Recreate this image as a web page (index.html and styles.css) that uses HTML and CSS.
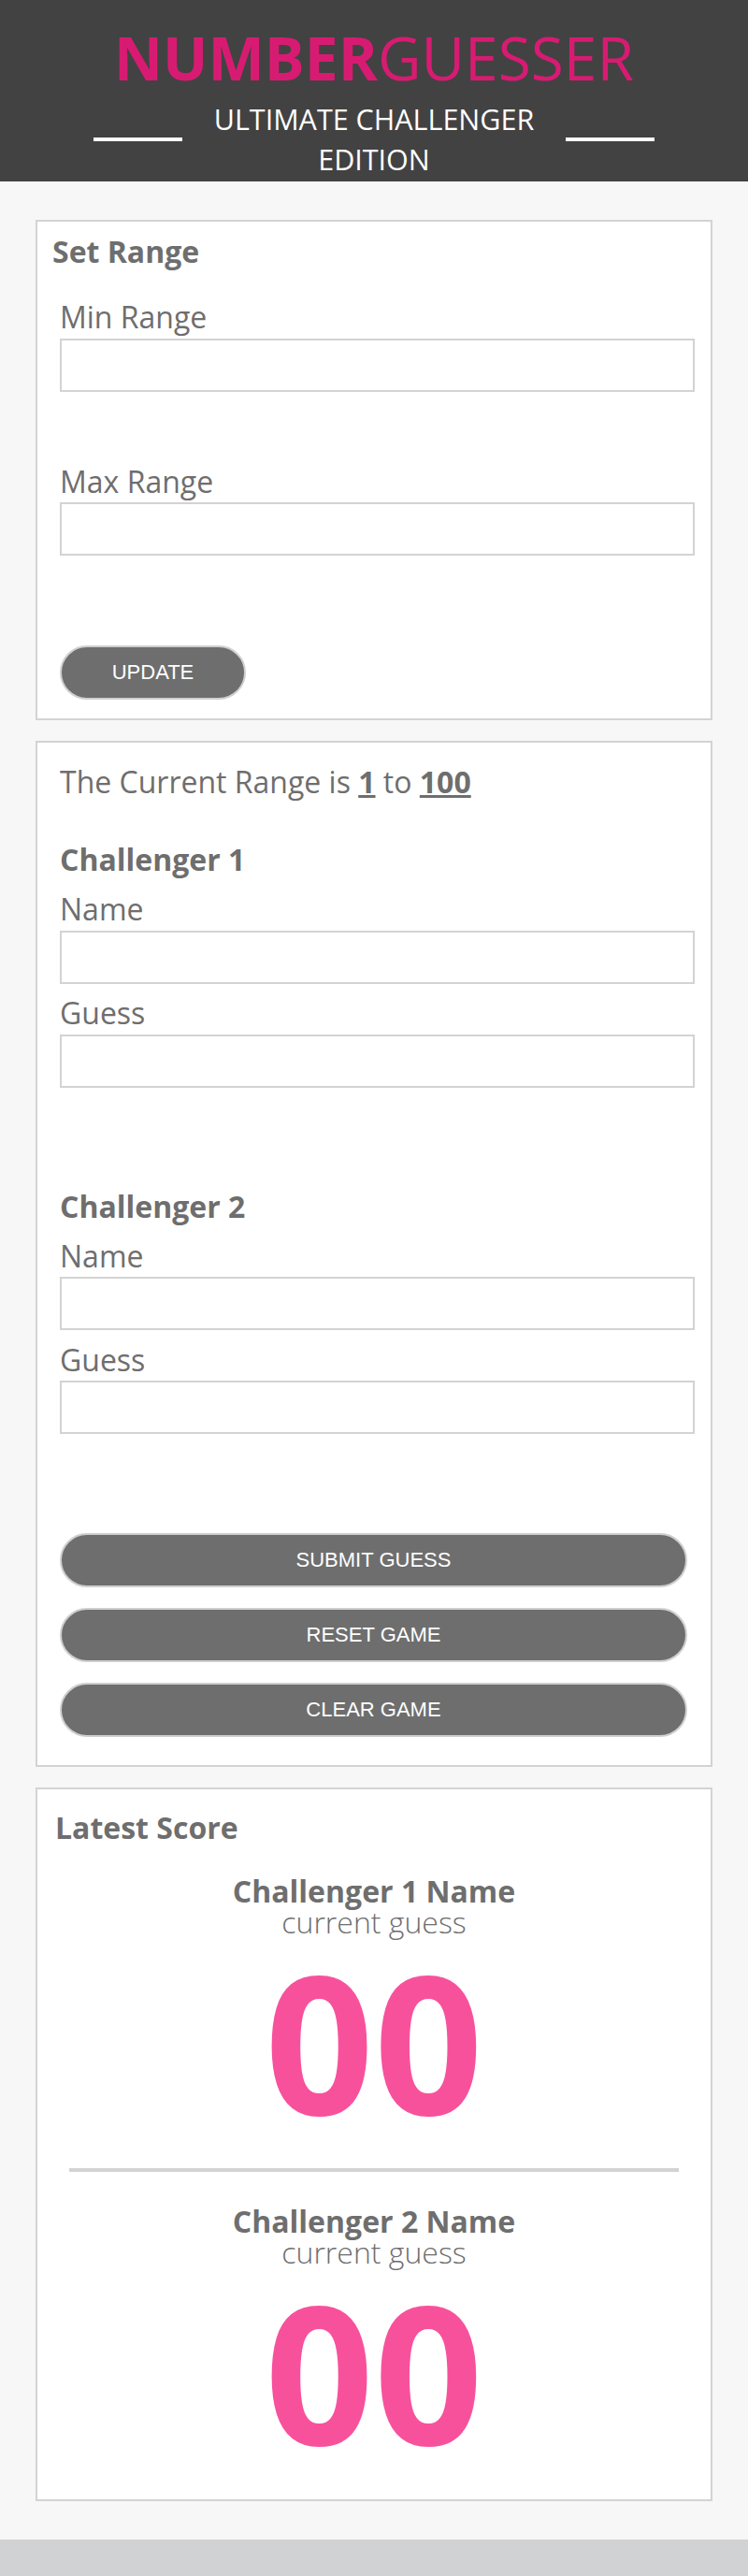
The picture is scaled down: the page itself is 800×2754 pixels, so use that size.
FILE: index.html
```html
<!DOCTYPE html>
<html lang="en">
<head>
<meta charset="utf-8">
<title>Number Guesser</title>
<link rel="stylesheet" href="styles.css">
</head>
<body>
<header class="site-header">
  <h1 class="title"><span class="title-bold">NUMBER</span><span class="title-light">GUESSER</span></h1>
  <div class="subtitle-row">
    <span class="rule"></span>
    <h2 class="subtitle">ULTIMATE CHALLENGER EDITION</h2>
    <span class="rule"></span>
  </div>
</header>
<main class="main">
  <section class="card range-card">
    <h3 class="card-title range-title">Set Range</h3>
    <label class="field-label first-label">Min Range</label>
    <input class="field-input" type="text">
    <label class="field-label spaced-label">Max Range</label>
    <input class="field-input" type="text">
    <button class="pill-btn update-btn">UPDATE</button>
  </section>

  <section class="card game-card">
    <p class="current-range">The Current Range is <strong class="range-num">1</strong> to <strong class="range-num">100</strong></p>
    <h3 class="card-title challenger-title first-challenger">Challenger 1</h3>
    <label class="field-label tight-label">Name</label>
    <input class="field-input" type="text">
    <label class="field-label tight-label">Guess</label>
    <input class="field-input" type="text">
    <h3 class="card-title challenger-title second-challenger">Challenger 2</h3>
    <label class="field-label tight-label">Name</label>
    <input class="field-input" type="text">
    <label class="field-label tight-label">Guess</label>
    <input class="field-input" type="text">
    <div class="btn-stack">
      <button class="pill-btn wide-btn">SUBMIT GUESS</button>
      <button class="pill-btn wide-btn">RESET GAME</button>
      <button class="pill-btn wide-btn">CLEAR GAME</button>
    </div>
  </section>

  <section class="card score-card">
    <h3 class="card-title score-title">Latest Score</h3>
    <div class="score-block">
      <p class="score-name">Challenger 1 Name</p>
      <p class="score-sub">current guess</p>
      <p class="score-num">00</p>
    </div>
    <hr class="score-divider">
    <div class="score-block">
      <p class="score-name">Challenger 2 Name</p>
      <p class="score-sub">current guess</p>
      <p class="score-num">00</p>
    </div>
  </section>
</main>
<footer class="site-footer"></footer>
</body>
</html>
```

FILE: styles.css
```css
* { box-sizing: border-box; }

body {
  margin: 0;
  background: #f7f7f7;
  font-family: "Open Sans", "Liberation Sans", sans-serif;
  color: #6e6e6e;
}

.site-header {
  background: #424242;
  padding: 18px 0 2px;
  text-align: center;
}

.title {
  margin: 0;
  font-size: 64px;
  line-height: 88px;
  color: #d81b72;
  letter-spacing: 0;
}
.title-bold { font-weight: 700; }
.title-light { font-weight: 400; }

.subtitle-row {
  width: 600px;
  margin: 0 auto;
  display: flex;
  align-items: center;
}
.rule {
  flex: 0 0 95px;
  height: 4px;
  background: #ffffff;
}
.subtitle {
  flex: 1;
  margin: 0;
  font-size: 30.5px;
  font-weight: 400;
  line-height: 43px;
  color: #ffffff;
}

.main {
  padding: 41px 0;
  display: flex;
  flex-direction: column;
  align-items: center;
  gap: 22px;
}

.card {
  width: 724px;
  background: #ffffff;
  border: 2px solid #d3d3d3;
  display: flex;
  flex-direction: column;
  align-items: flex-start;
}

.card-title {
  margin: 0;
  font-size: 32px;
  font-weight: 700;
  line-height: 43.6px;
}

.range-card { padding: 9.6px 17px 20px 24px; }
.range-title { margin-left: -8px; }

.field-label {
  display: block;
  font-size: 32px;
  line-height: 43.6px;
}
.first-label { margin-top: 27px; }
.spaced-label { margin-top: 74px; }
.tight-label { margin-top: 9.6px; }
.first-challenger + .tight-label { margin-top: 9.4px; }

.field-input {
  display: block;
  width: 100%;
  height: 57px;
  margin-top: 1px;
  border: 2px solid #d3d3d3;
  background: #ffffff;
  font-size: 24px;
}

.pill-btn {
  background: #6e6e6e;
  color: #ffffff;
  border: 2px solid #cfcfcf;
  border-radius: 30px;
  height: 58px;
  font-family: "Liberation Sans", Arial, sans-serif;
  font-size: 22px;
  padding: 0;
}
.update-btn {
  width: 199px;
  margin-top: 96px;
}

.game-card { padding: 19.8px 17px 30px 24px; }
.current-range {
  margin: 0;
  font-size: 32px;
  line-height: 43.6px;
}
.range-num { font-weight: 700; text-decoration: underline; }
.first-challenger { margin-top: 39.4px; }
.second-challenger { margin-top: 104.8px; }
.second-challenger + .tight-label { margin-top: 9.4px; }

.btn-stack {
  width: calc(100% - 8px);
  margin-top: 106px;
  display: flex;
  flex-direction: column;
  gap: 22px;
}
.wide-btn { width: 100%; }

.score-card {
  padding: 18.8px 0 36.6px;
  align-items: stretch;
}
.score-title { margin-left: 19px; }

.score-block {
  text-align: center;
  margin-top: 29px;
}
.score-divider + .score-block { margin-top: 35.6px; }

.score-name {
  margin: 0;
  font-size: 32px;
  font-weight: 700;
  line-height: 33px;
}
.score-sub {
  margin: 0;
  font-size: 32px;
  font-weight: 300;
  line-height: 33px;
}
.score-num {
  margin: 11px 0 0;
  font-size: 204px;
  font-weight: 700;
  line-height: 200px;
  color: #f8519c;
}

.score-divider {
  width: 652px;
  height: 4px;
  margin: 36.6px auto 0;
  border: 0;
  background: #d3d3d3;
}

.site-footer {
  height: 40px;
  background: #d1d2d4;
}
```
